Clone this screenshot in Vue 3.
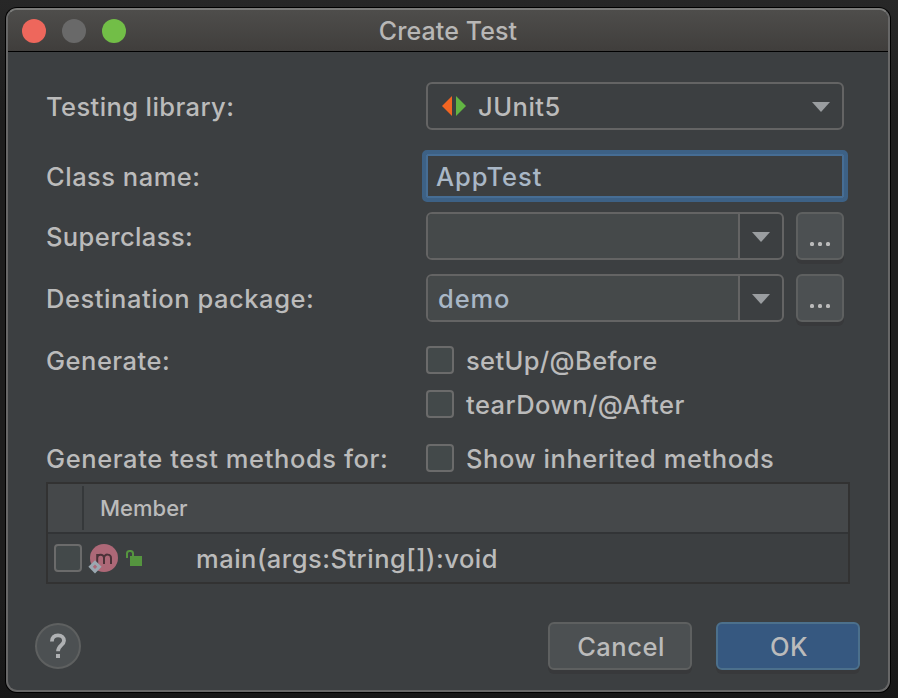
<script setup>
import { ref } from 'vue'

const className = ref('AppTest')
const destination = ref('demo')
const members = [{ id: 1, signature: 'main(args:String[]):void' }]
</script>

<template>
  <div class="desktop">
    <section class="window">
      <header class="titlebar">
        <div class="lights">
          <i class="light close"></i><i class="light minimize"></i><i class="light maximize"></i>
        </div>
        <h1 class="title">Create Test</h1>
      </header>

      <main class="body">
        <div class="row library">
          <span class="label l-library">Testing library:</span>
          <div class="combo plain">
            <svg class="junit" width="24" height="20" viewBox="0 0 24 20">
              <path d="M10 0V20L0 10Z" fill="#f26522" />
              <path d="M14 0V20L24 10Z" fill="#62b543" />
            </svg>
            <span class="value t-junit">JUnit5</span>
            <svg class="arrow" width="18" height="10" viewBox="0 0 18 10"><path d="M0 0H18L9 10Z" /></svg>
          </div>
        </div>

        <div class="row class-name">
          <span class="label l-class">Class name:</span>
          <div class="field"><span class="t-app">{{ className }}</span></div>
        </div>

        <div class="row super">
          <span class="label l-super">Superclass:</span>
          <div class="combo editable">
            <div class="entry"></div>
            <div class="drop">
              <svg class="arrow" width="18" height="10" viewBox="0 0 18 10"><path d="M0 0H18L9 10Z" /></svg>
            </div>
          </div>
          <div class="button browse"><i></i><i></i><i></i></div>
        </div>

        <div class="row destination">
          <span class="label l-dest">Destination package:</span>
          <div class="combo editable">
            <div class="entry"><span class="t-demo">{{ destination }}</span></div>
            <div class="drop">
              <svg class="arrow" width="18" height="10" viewBox="0 0 18 10"><path d="M0 0H18L9 10Z" /></svg>
            </div>
          </div>
          <div class="button browse"><i></i><i></i><i></i></div>
        </div>

        <div class="row check before">
          <span class="label l-gen">Generate:</span>
          <i class="box"></i><span class="option t-before">setUp/@Before</span>
        </div>
        <div class="row check after">
          <span class="label"></span>
          <i class="box"></i><span class="option t-after">tearDown/@After</span>
        </div>
        <div class="row check inherited">
          <span class="label l-methods">Generate test methods for:</span>
          <i class="box"></i><span class="option t-inherited">Show inherited methods</span>
        </div>

        <div class="table">
          <div class="thead">
            <div class="th-check"></div>
            <span class="th">Member</span>
          </div>
          <div v-for="m in members" :key="m.id" class="tr">
            <i class="box"></i>
            <svg class="method" width="32" height="32" viewBox="0 0 32 32">
              <circle cx="16" cy="14" r="14" fill="#ad6877" />
              <path d="M9.2 20V10M9.2 14C9.2 9.8 16 9.4 16 14V20M16 14C16 9.4 23 9.6 23 14V20" fill="none" stroke="#4b3238" stroke-width="2" />
              <path d="M7 16.2L13.6 22.8L7 29.4L0.4 22.8Z" fill="#9aa7b0" />
              <path d="M7 20.6L9.2 22.8L7 25L4.8 22.8Z" fill="#ad6877" />
            </svg>
            <svg class="lock" width="16" height="16" viewBox="0 0 16 16">
              <path d="M1 8V3.5Q1 1 3.5 1H4.5Q7 1 7 3.5V7" fill="none" stroke="#55953f" stroke-width="2" />
              <path d="M4 6H16V16H4Z" fill="#55953f" />
            </svg>
            <span class="signature">{{ m.signature }}</span>
          </div>
        </div>

        <footer class="footer">
          <div class="help">
            <svg width="18" height="26" viewBox="0 0 18 26">
              <path d="M2.9 8.5C2.9 4.6 5.4 2.4 9 2.4C12.7 2.4 15 4.5 15 7.7C15 12 9 12.4 9 18.3" fill="none" stroke="#afb1b3" stroke-width="3.8" />
              <path d="M7 21H11V25H7Z" fill="#afb1b3" />
            </svg>
          </div>
          <div class="button cancel"><span class="t-cancel">Cancel</span></div>
          <div class="button ok"><span class="t-ok">OK</span></div>
        </footer>
      </main>
    </section>
  </div>
</template>

<style>
body {
  background: #1e1e1e;
}
</style>

<style scoped>
* {
  box-sizing: border-box;
}
.desktop {
  width: 898px;
  height: 698px;
  padding: 8px 8px 6px 6px;
  overflow: hidden;
  background: linear-gradient(180deg, #272727 0, #1e1e1e 120px, #1e1e1e 600px, #171717 698px);
  font-family: Inter, "Liberation Sans", sans-serif;
  font-size: 25.5px;
  font-weight: 450;
  line-height: 32px;
  letter-spacing: 0.5px;
  color: #bbbbbb;
  white-space: nowrap;
}
.window {
  width: 884px;
  height: 684px;
  border: 2px solid #676767;
  border-top-color: #7b7b79;
  border-radius: 11px;
  box-shadow: 0 0 0 1px #000;
  background: #3c3f41;
  overflow: hidden;
}
.titlebar {
  display: grid;
  grid-template-columns: 120px 1fr 120px;
  align-items: center;
  height: 42px;
  padding-left: 14px;
  border-bottom: 1px solid #000;
  background: linear-gradient(#4e4d4b, #403e3c);
}
.lights {
  display: flex;
  gap: 16px;
}
.light {
  width: 24px;
  height: 24px;
  border-radius: 50%;
}
.close { background: #ee675c; }
.minimize { background: #696969; }
.maximize { background: #72be47; }
.title {
  margin: 0;
  padding-right: 14px;
  font-size: 25px;
  font-weight: 450;
  letter-spacing: 0.1px;
  text-align: center;
  color: #b8b7b6;
}
.body {
  padding: 30px 0 0 38px;
}
.row {
  display: flex;
  align-items: center;
  height: 48px;
}
.label {
  width: 380px;
  flex: none;
  padding-top: 2px;
}
.combo {
  display: flex;
  align-items: center;
  height: 48px;
  border: 2px solid #646464;
  border-radius: 6px;
}
.plain {
  width: 418px;
  padding: 0 12px 0 14px;
}
.value {
  flex: 1;
  padding: 2px 0 0 12px;
}
.arrow {
  margin-top: 2px;
  fill: #9a9da0;
}
.class-name {
  margin-top: 20px;
  height: 52px;
}
.field {
  display: flex;
  align-items: center;
  width: 426px;
  height: 52px;
  margin-left: -4px;
  padding: 2px 0 0 10px;
  border: 4px solid #3d6185;
  border-radius: 5px;
  box-shadow: inset 0 0 0 2px #466d94;
  color: #a9b7c6;
}
.t-app { letter-spacing: 0.95px; }
.t-demo { letter-spacing: 0.9px; }
.super { margin-top: 10px; }
.destination { margin-top: 14px; }
.editable {
  width: 358px;
  overflow: hidden;
}
.entry {
  display: flex;
  align-items: center;
  flex: 1;
  height: 44px;
  padding: 2px 0 0 10px;
  background: #45494a;
  color: #a9b7c6;
}
.drop {
  display: flex;
  align-items: center;
  justify-content: center;
  width: 44px;
  height: 44px;
  border-left: 2px solid #646464;
}
.button {
  display: flex;
  align-items: center;
  justify-content: center;
  height: 48px;
  border: 2px solid #5e6060;
  border-radius: 6px;
  background: #4c5052;
  box-shadow: 0 4px 0 #38393b;
}
.browse {
  width: 48px;
  margin-left: 12px;
  gap: 4px;
  padding-top: 16px;
}
.browse i {
  width: 4px;
  height: 4px;
  border-radius: 1.5px;
  background: #bbbbbb;
}
.check { height: 28px; }
.before { margin-top: 24px; }
.after { margin-top: 16px; }
.inherited { margin-top: 26px; }
.box {
  flex: none;
  width: 28px;
  height: 28px;
  border: 2px solid #6b6b6b;
  border-radius: 4px;
  background: #43494a;
}
.option {
  padding: 2px 0 0 12px;
}
.l-library,
.l-super { letter-spacing: 0.4px; }
.t-before { letter-spacing: 0.36px; }
.t-after { letter-spacing: 0.46px; }
.l-dest,
.t-inherited { letter-spacing: 0.56px; }
.l-methods { letter-spacing: 0.6px; }
.table {
  width: 804px;
  height: 102px;
  margin-top: 10px;
  border: 2px solid #323232;
}
.thead {
  display: flex;
  align-items: center;
  height: 50px;
  border-bottom: 2px solid #323436;
  background: #45484a;
}
.th-check {
  width: 36px;
  height: 44px;
  border-right: 2px solid #35383a;
}
.th {
  padding: 0 0 1px 16px;
  font-size: 22px;
  letter-spacing: 0;
}
.tr {
  display: flex;
  align-items: center;
  height: 48px;
  padding-left: 6px;
}
.method {
  margin: 4px 0 0 6px;
}
.lock {
  margin-left: 6px;
}
.signature {
  padding: 2px 0 0 54px;
}
.footer {
  display: flex;
  align-items: center;
  height: 48px;
  margin: 38px 0 0 -11px;
}
.help {
  display: flex;
  align-items: center;
  justify-content: center;
  width: 46px;
  height: 46px;
  border: 2px solid #5e6060;
  border-radius: 50%;
  background: #4c5052;
}
.cancel {
  width: 144px;
  margin-left: 467px;
  padding: 2px 0 0 2px;
}
.ok {
  width: 144px;
  margin-left: 24px;
  padding: 2px 0 0 2px;
  border-color: #4c708c;
  background: #365880;
}
</style>
